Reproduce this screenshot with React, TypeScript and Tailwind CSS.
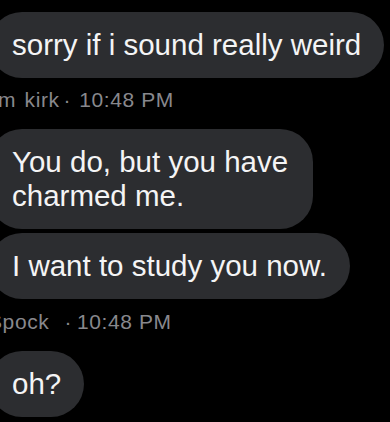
export default function App() {
  const bubble =
    "bg-[#2c2d30] text-[#f4f4f5] rounded-[33px] pl-[23px] pr-[23px] py-4 text-[29.5px] leading-[34px] whitespace-nowrap";
  const meta =
    "flex items-baseline text-[#88888d] text-[21px] leading-[26px] tracking-[0.6px] whitespace-nowrap";

  return (
    <div
      className="w-[390px] h-[422px] bg-black overflow-hidden"
      style={{ fontFamily: "'Liberation Sans', Arial, sans-serif" }}
    >
      <div className="-ml-[11px] flex flex-col items-start pt-[12px]">
        <div className={bubble}>sorry if i sound really weird</div>
        <div className={meta + " mt-[9px] ml-[9px]"}>
          <span className="[word-spacing:2px]">m kirk</span>
          <span className="ml-[4px]">·</span>
          <span className="ml-[8px]">10:48 PM</span>
        </div>
        <div className={bubble + " mt-[16px] w-[324px]"}>
          You do, but you have
          <br />
          charmed me.
        </div>
        <div className={bubble + " mt-[4px]"}>I want to study you now.</div>
        <div className={meta + " mt-[10px] -ml-[1px]"}>
          <span>Spock</span>
          <span className="ml-[15px]">·</span>
          <span className="ml-[5px]">10:48 PM</span>
        </div>
        <div className={bubble + " mt-[16px] pr-[19px]"}>oh?</div>
      </div>
    </div>
  );
}
